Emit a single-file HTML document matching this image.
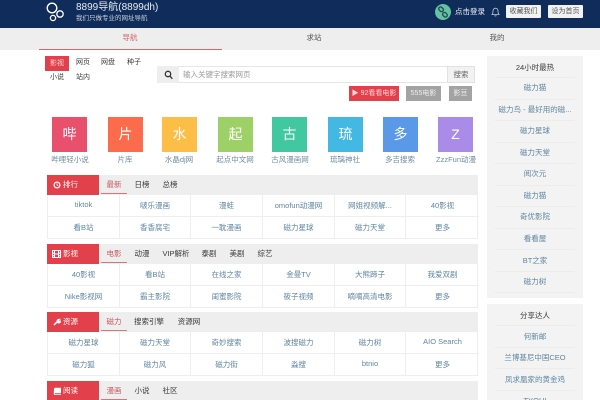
<!DOCTYPE html>
<html lang="zh-CN"><head><meta charset="utf-8"><title>8899导航</title>
<style>
*{box-sizing:border-box;margin:0;padding:0}
html,body{width:600px;height:400px;overflow:hidden;background:#fff}
body{font-family:"Liberation Sans","Noto Sans CJK SC",sans-serif;font-size:7.5px;color:#3a3a3a}
#w{position:absolute;left:0;top:0;width:600px;height:400px;overflow:hidden;filter:blur(.35px)}
.a{position:absolute;white-space:nowrap;line-height:10px}
.c{transform:translateX(-50%)}
.box{position:absolute}
.icon{position:absolute;top:117px;width:35px;height:34.5px;color:#fff;font-size:14px;line-height:34px;text-align:center}
.lab{position:absolute;top:155px;line-height:10px;color:#6f8ca0;transform:translateX(-50%);white-space:nowrap}
.p{position:absolute;left:47px;width:431px}
.h{position:absolute;left:0;top:0;width:431px;height:20px;background:#eee}
.r{position:absolute;left:0;top:0;width:52px;height:20px;background:#e2404a;color:#fff;line-height:20px;padding-left:16px}
.u{position:absolute;left:54px;top:18px;width:26px;height:1px;background:#d9747b}
.t{position:absolute;top:0;line-height:20px;transform:translateX(-50%);white-space:nowrap;color:#3a3a3a}
.t.on{color:#c9565e}
.g{position:absolute;left:0;top:20px;width:431px;display:grid;grid-template-columns:72px 71px 72px 72px 71px 73px;border:1px solid #eee;border-top:0}
.g div{height:21.5px;line-height:21px;text-align:center;color:#5f86a0;border-right:1px solid #eee;border-bottom:1px solid #eee;white-space:nowrap;overflow:hidden}
.g div:nth-child(6n){border-right:0}
.g div:nth-last-child(-n+6){border-bottom:0}
.s{position:absolute;left:487px;width:96px;background:#f3f3f3}
.s div{position:absolute;left:8px;width:80px;text-align:center;line-height:10px;color:#5f86a0;white-space:nowrap;overflow:hidden}
.s i{position:absolute;left:8px;width:80px;height:1px;background:#ececec}
</style></head><body><div id="w">
<div class="box" style="left:0;top:0;width:600px;height:28px;background:#0f2c5a"></div>
<svg class="box" style="left:44px;top:0" width="24" height="26" fill="none" stroke="#fff"><circle cx="8" cy="8" r="4.8" stroke-width="1.4"/><circle cx="9" cy="18" r="2.6" stroke-width="1.3"/><circle cx="16" cy="14" r="3.2" stroke-width="1.3"/></svg>
<div class="a" style="left:76px;top:2px;font-size:10px;line-height:12px;color:#e8edf3">8899导航(8899dh)</div>
<div class="a" style="left:76px;top:14px;font-size:6.5px;color:#c6d0dc">我们只做专业的网址导航</div>
<div class="box" style="left:435px;top:4px;width:16px;height:16px;border-radius:50%;background:#63c2a2"></div>
<svg class="box" style="left:435px;top:4px" width="16" height="16" fill="none" stroke="#274a55" stroke-width="1.3"><rect x="3.6" y="3.4" width="5" height="3.6" rx="1.6" transform="rotate(45 6 5.2)"/><rect x="7.4" y="9" width="5" height="3.6" rx="1.6" transform="rotate(45 10 10.8)"/></svg>
<div class="a" style="left:455px;top:7px;color:#f2f4f7">点击登录</div>
<svg class="box" style="left:491px;top:7px" width="9" height="10" fill="none" stroke="#c4ccd6" stroke-width=".8"><path d="M1 7.5c1-1 1-2 1-3.500 0-1.500 1-2.800 2.500-2.800S7 2.500 7 4c0 1.500 0 2.500 1 3.500ZM3.600 8.500c.4.700 1.400.700 1.800 0"/></svg>
<div class="box" style="left:506px;top:5px;width:35px;height:13px;background:#f2f2f2;border-radius:1px;color:#555;text-align:center;line-height:13px;font-size:7px">收藏我们</div>
<div class="box" style="left:548px;top:5px;width:35px;height:13px;background:#f2f2f2;border-radius:1px;color:#555;text-align:center;line-height:13px;font-size:7px">设为首页</div>

<div class="box" style="left:0;top:28px;width:600px;height:22px;background:#eee"></div>
<div class="box" style="left:39px;top:49px;width:183px;height:1px;background:#d9666d"></div>
<div class="a c" style="left:130px;top:33px;color:#d0666c">导航</div>
<div class="a c" style="left:314px;top:33px;color:#555">求站</div>
<div class="a c" style="left:497px;top:33px;color:#555">我的</div>

<div class="box" style="left:45px;top:56px;width:24px;height:15px;background:#e2404a;color:#f6d5d7;text-align:center;line-height:15px;font-size:7px">影视</div>
<div class="a c" style="left:83px;top:58px;font-size:7px">网页</div>
<div class="a c" style="left:108px;top:58px;font-size:7px">网盘</div>
<div class="a c" style="left:134px;top:58px;font-size:7px">种子</div>
<div class="a c" style="left:57px;top:73px;font-size:7px">小说</div>
<div class="a c" style="left:83px;top:73px;font-size:7px">站内</div>

<div class="box" style="left:157px;top:66px;width:318px;height:17px;border:1px solid #e6e6e6;background:#fff"></div>
<div class="box" style="left:157px;top:66px;width:22px;height:17px;background:#eee"></div>
<svg class="box" style="left:164px;top:70px" width="9" height="10" fill="none" stroke="#333" stroke-width="1.300"><circle cx="4" cy="4" r="2.700"/><path d="M6 6.200 8.300 8.800"/></svg>
<div class="a" style="left:183px;top:70px;color:#999">输入关键字搜索网页</div>
<div class="box" style="left:447px;top:66px;width:28px;height:17px;background:#f2f2f2;border:1px solid #e2e2e2;text-align:center;line-height:15px;color:#666">搜索</div>

<div class="box" style="left:349px;top:86px;width:50px;height:15px;background:#e2404a;color:#f8d8da;line-height:15px;font-size:7px;text-align:center">▶ 92看看电影</div>
<div class="box" style="left:406px;top:86px;width:35px;height:15px;background:#a3a3a3;color:#eee;line-height:15px;font-size:7px;text-align:center">555电影</div>
<div class="box" style="left:449px;top:86px;width:23px;height:15px;background:#a3a3a3;color:#eee;line-height:15px;font-size:7px;text-align:center">影豆</div>

<div class="icon" style="left:52px;background:#e8506b">哔</div>
<div class="icon" style="left:108px;background:#fb6b4c">片</div>
<div class="icon" style="left:162px;background:#fdbe48">水</div>
<div class="icon" style="left:218px;background:#9dd066">起</div>
<div class="icon" style="left:272px;background:#42c8a0">古</div>
<div class="icon" style="left:328px;background:#42b8e2">琉</div>
<div class="icon" style="left:383px;background:#5a99e8">多</div>
<div class="icon" style="left:438px;background:#aa8ce8">Z</div>
<div class="lab" style="left:70px">哔哩轻小说</div>
<div class="lab" style="left:125px">片库</div>
<div class="lab" style="left:179px">水晶dj网</div>
<div class="lab" style="left:235px">起点中文网</div>
<div class="lab" style="left:290px">古风漫画网</div>
<div class="lab" style="left:345px">琉璃神社</div>
<div class="lab" style="left:400px">多吉搜索</div>
<div class="lab" style="left:456px">ZzzFun动漫</div>

<div class="p" style="top:175px">
<div class="h"></div><div class="r">排行</div><div class="u"></div>
<svg class="box" style="left:6px;top:6px" width="8" height="8" fill="none" stroke="#fff" stroke-width="1.200"><circle cx="4" cy="4" r="2.900"/><path d="M4 2.300V4l1.200.8" stroke-width=".8"/></svg>
<div class="t on" style="left:67px">最新</div><div class="t" style="left:95px">日榜</div><div class="t" style="left:123px">总榜</div>
<div class="g"><div style="line-height:20px">tiktok</div><div>啵乐漫画</div><div>漫蛙</div><div>omofun动漫网</div><div>网姐视频解...</div><div>40影视</div><div>看B站</div><div>香香腐宅</div><div>一耽漫画</div><div>磁力星球</div><div>磁力天堂</div><div>更多</div></div>
</div>

<div class="p" style="top:244px">
<div class="h"></div><div class="r">影视</div><div class="u"></div>
<svg class="box" style="left:5px;top:6px" width="9" height="8" fill="#fff"><path d="M0 0h9v8H0zM1 1v1.500h1V1zm0 2.700v1.500h1V3.700zm0 2.600V7h1v-.7zM7 1v1.500h1V1zm0 2.700v1.500h1V3.700zm0 2.600V7h1v-.7zM3 1v2.500h3V1zm0 3.500V7h3V4.500z" fill-rule="evenodd"/></svg>
<div class="t on" style="left:67px">电影</div><div class="t" style="left:95px">动漫</div><div class="t" style="left:129px">VIP解析</div><div class="t" style="left:162px">泰剧</div><div class="t" style="left:190px">美剧</div><div class="t" style="left:218px">综艺</div>
<div class="g"><div>40影视</div><div>看B站</div><div>在线之家</div><div>金曼TV</div><div>大熊蹄子</div><div>我爱双剧</div><div>Nike影视网</div><div>霸主影院</div><div>闺蜜影院</div><div>筱子视频</div><div>嘀嘀高清电影</div><div>更多</div></div>
</div>

<div class="p" style="top:312px">
<div class="h"></div><div class="r">资源</div><div class="u"></div>
<svg class="box" style="left:6px;top:6px" width="8" height="8" fill="none" stroke="#fff" stroke-width="1.500"><path d="M1 7 4.300 3.700"/><path d="M4 3.500C4 2 5.200 1 6.800 1.300L5.600 2.700l.5 1 1.300-.6C7.500 4.600 6 5.400 4.600 4.500" stroke-width="1.100" fill="#fff"/></svg>
<div class="t on" style="left:67px">磁力</div><div class="t" style="left:102px">搜索引擎</div><div class="t" style="left:142px">资源网</div>
<div class="g"><div>磁力星球</div><div>磁力天堂</div><div>奇妙搜索</div><div>波搜磁力</div><div>磁力树</div><div style="line-height:20px">AIO Search</div><div>磁力狐</div><div>磁力风</div><div>磁力街</div><div>淼搜</div><div style="line-height:20px">btnio</div><div>更多</div></div>
</div>

<div class="p" style="top:381px">
<div class="h"></div><div class="r">阅读</div><div class="u"></div>
<svg class="box" style="left:6px;top:6px" width="8" height="8" fill="#fff"><path d="M1 1.500 2 .8h6v5.400H2.200c-.7 0-.7 1 0 1H8V8H2C.8 8 .8 7 .8 6.500z"/></svg>
<div class="t on" style="left:67px">漫画</div><div class="t" style="left:95px">小说</div><div class="t" style="left:123px">社区</div>
</div>

<div class="s" style="top:56px;height:242px">
<div style="top:7px;color:#3a3a3a">24小时最热</div><i style="top:21px"></i>
<div style="top:27px">磁力猫</div><i style="top:43px"></i>
<div style="top:49px;left:4px;width:88px">磁力鸟 - 最好用的磁...</div><i style="top:64px"></i>
<div style="top:70px">磁力星球</div><i style="top:86px"></i>
<div style="top:92px">磁力天堂</div><i style="top:107px"></i>
<div style="top:113px">阅次元</div><i style="top:129px"></i>
<div style="top:135px">磁力猫</div><i style="top:150px"></i>
<div style="top:156px">奇优影院</div><i style="top:172px"></i>
<div style="top:178px">看看屋</div><i style="top:193px"></i>
<div style="top:200px">BT之家</div><i style="top:215px"></i>
<div style="top:221px">磁力树</div><i style="top:236px"></i>
</div>
<div class="s" style="top:304px;height:96px">
<div style="top:7px;color:#3a3a3a">分享达人</div><i style="top:21px"></i>
<div style="top:28px">何新邮</div><i style="top:43px"></i>
<div style="top:49px;left:4px;width:88px">兰博基尼中国CEO</div><i style="top:64px"></i>
<div style="top:71px;left:4px;width:88px">凤求凰家的黄金鸡</div><i style="top:86px"></i>
<div style="top:92px">TYOHI</div>
</div>
</div></body></html>
